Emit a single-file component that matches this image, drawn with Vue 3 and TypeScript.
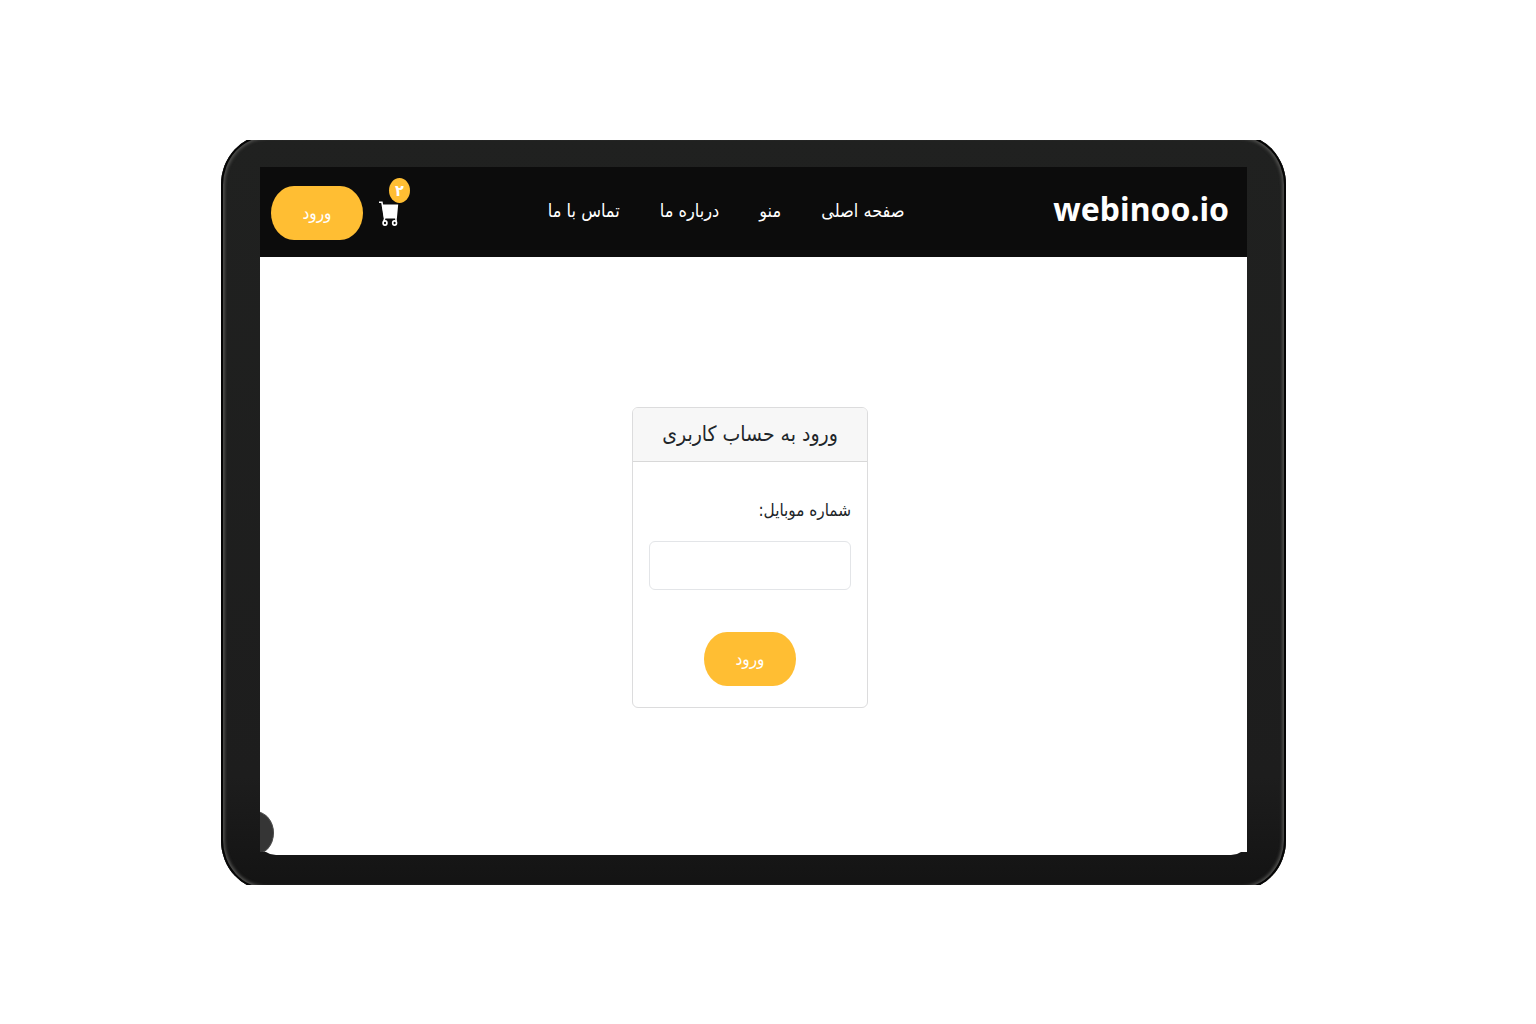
<script setup lang="ts">
import { ref } from 'vue'

interface NavItem {
  label: string
  href: string
}

const navItems: NavItem[] = [
  { label: 'صفحه اصلی', href: '#home' },
  { label: 'منو', href: '#menu' },
  { label: 'درباره ما', href: '#about' },
  { label: 'تماس با ما', href: '#contact' },
]

const cartCount = '۲'
const mobile = ref('')
</script>

<template>
  <div class="page" dir="rtl">
    <div class="tablet">
      <div class="bezel">
        <div class="screen">
          <header class="navbar">
            <a class="brand" href="#home" dir="ltr">webinoo.io</a>
            <nav class="menu">
              <a v-for="item in navItems" :key="item.href" :href="item.href">{{ item.label }}</a>
            </nav>
            <div class="actions">
              <a class="cart" href="#cart" aria-label="سبد خرید">
                <svg viewBox="0 0 20 25" width="20" height="25" aria-hidden="true">
                  <path d="M3 3.500h16.200L17.900 17.500H5z" fill="#fff" />
                  <path d="M0 1.200h2.900L5.600 17.500 5 20M16.800 16l.3 4" fill="none" stroke="#fff" stroke-width="1.600" />
                  <ellipse cx="6" cy="22" rx="1.900" ry="2.100" fill="none" stroke="#fff" stroke-width="1.700" />
                  <ellipse cx="15.600" cy="22" rx="1.900" ry="2.100" fill="none" stroke="#fff" stroke-width="1.700" />
                </svg>
                <span class="badge">{{ cartCount }}</span>
              </a>
              <button class="pill" type="button">ورود</button>
            </div>
          </header>
          <main class="content">
            <form class="card" @submit.prevent>
              <h1 class="card-title">ورود به حساب کاربری</h1>
              <div class="card-body">
                <label for="mobile">شماره موبایل:</label>
                <input id="mobile" v-model="mobile" type="tel" />
                <button class="pill" type="submit">ورود</button>
              </div>
            </form>
          </main>
          <span class="knob"></span>
        </div>
      </div>
    </div>
  </div>
</template>

<style>
body {
  margin: 0;
  background: #fff;
}
</style>

<style scoped>
.page {
  box-sizing: border-box;
  min-height: 100vh;
  padding: 140px 250px 139px 221px;
  font-family: 'DejaVu Sans Condensed', 'DejaVu Sans', sans-serif;
  color: #212529;
}

.tablet {
  overflow: hidden;
}

.bezel {
  margin: -5px 0;
  padding: 32px 39px 35px;
  border-radius: 46px / 50px;
  background: linear-gradient(#202120, #1d1d1d 85%, #131313);
  box-shadow:
    inset 0 0 0 2px #050505,
    inset 0 0 3px 4px #4c4c4a;
}

.screen {
  position: relative;
  overflow: hidden;
  background: #fff;
  clip-path: polygon(
    0 0,
    100% 0,
    100% calc(100% - 3px),
    calc(100% - 6px) calc(100% - 3px),
    calc(100% - 10px) calc(100% - 1px),
    calc(100% - 16px) 100%,
    16px 100%,
    10px calc(100% - 1px),
    6px calc(100% - 3px),
    0 calc(100% - 3px)
  );
}

.navbar {
  box-sizing: border-box;
  display: flex;
  align-items: center;
  justify-content: space-between;
  height: 90px;
  padding: 2px 18px 0 11px;
  background: #0c0c0c;
}

.brand {
  padding-bottom: 8px;
  font: 700 32px/44px 'Noto Sans', sans-serif;
  color: #fff;
  text-decoration: none;
}

.menu {
  display: flex;
  gap: 40px;
  padding-bottom: 4px;
}

.menu a {
  font-size: 18px;
  line-height: 24px;
  color: #fff;
  text-decoration: none;
}

.actions {
  display: flex;
  align-items: center;
  gap: 16px;
}

.cart {
  position: relative;
  display: block;
  height: 25px;
}

.cart svg {
  display: block;
}

.badge {
  position: absolute;
  bottom: 23px;
  left: 10px;
  width: 21px;
  border-radius: 50%;
  background: #ffbe33;
  font-size: 16px;
  font-weight: 700;
  line-height: 25px;
  color: #fff;
  text-align: center;
}

.pill {
  box-sizing: border-box;
  width: 92px;
  height: 54px;
  padding: 0;
  border: 0;
  border-radius: 23px / 27px;
  background: #ffbe33;
  font-family: inherit;
  font-size: 17px;
  line-height: 24px;
  color: #fff;
}

.content {
  display: flex;
  justify-content: center;
  padding: 150px 7px 147px 0;
}

.card {
  box-sizing: border-box;
  width: 236px;
  border: 1px solid #dcdcdd;
  border-radius: 6px;
  background: #fff;
}

.card-title {
  margin: 0;
  border-bottom: 1px solid #d8d8d8;
  border-radius: 5px 5px 0 0;
  background: #f7f7f7;
  font-size: 21px;
  font-weight: 400;
  line-height: 53px;
  text-align: center;
}

.card-body {
  display: flex;
  flex-direction: column;
  padding: 36px 16px 21px;
}

.card-body label {
  font-size: 17px;
  line-height: 24px;
}

.card-body input {
  box-sizing: border-box;
  width: 100%;
  height: 49px;
  margin: 19px 0 42px;
  padding: 6px 12px;
  border: 1px solid #e3e5e8;
  border-radius: 6px;
  font-family: inherit;
  font-size: 17px;
  line-height: 24px;
}

.card-body .pill {
  align-self: center;
}

.knob {
  position: absolute;
  bottom: 0;
  left: -24px;
  width: 36px;
  height: 42px;
  border: 1px solid #4b4b4b;
  border-radius: 50%;
  background: #353535;
}
</style>
